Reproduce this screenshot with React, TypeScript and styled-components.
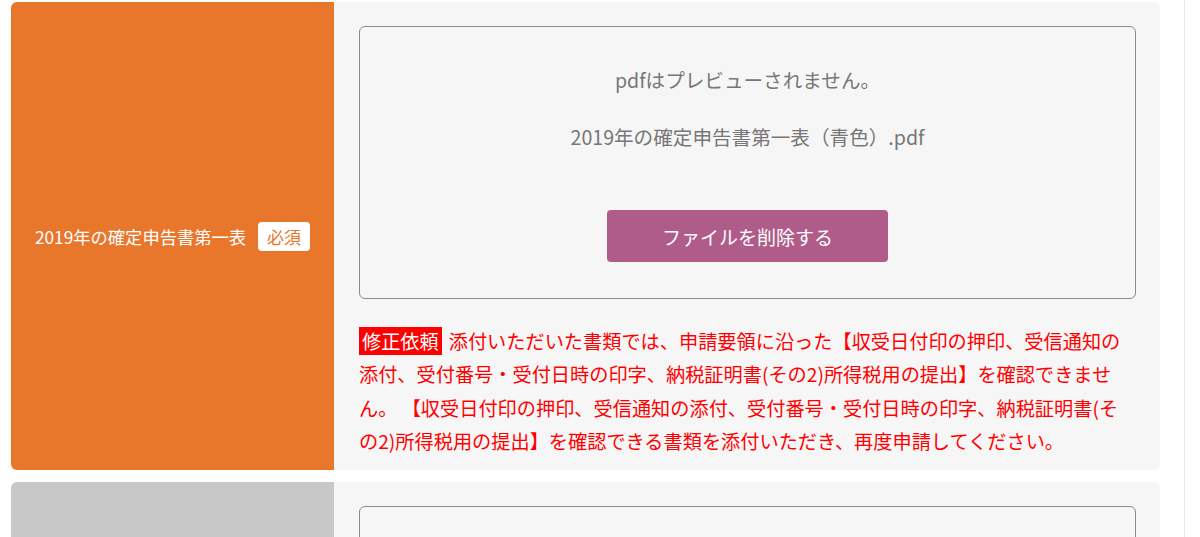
import React from 'react'
import styled, { createGlobalStyle } from 'styled-components'

const GlobalStyle = createGlobalStyle`
    html, body {
        margin: 0;
        padding: 0;
        background: #ffffff;
        font-family: 'Noto Sans CJK JP', 'Noto Sans', sans-serif;
    }
    * {
        box-sizing: border-box;
    }
`

type Upload = {
    label: string
    required: boolean
    fileName?: string
    done: boolean
    request?: string
}

const uploads: Upload[] = [
    {
        label: '2019年の確定申告書第一表',
        required: true,
        fileName: '2019年の確定申告書第一表（青色）.pdf',
        done: true,
        request:
            '添付いただいた書類では、申請要領に沿った【収受日付印の押印、受信通知の添付、受付番号・受付日時の印字、納税証明書(その2)所得税用の提出】を確認できません。 【収受日付印の押印、受信通知の添付、受付番号・受付日時の印字、納税証明書(その2)所得税用の提出】を確認できる書類を添付いただき、再度申請してください。',
    },
    {
        label: '2019年の確定申告書第二表',
        required: true,
        fileName: '2019年の確定申告書第二表.pdf',
        done: false,
    },
]

export default function App() {
    return (
        <>
            <GlobalStyle />
            <Page>
                <List>
                    {uploads.map((u) => (
                        <Card key={u.label}>
                            <LabelCol done={u.done}>
                                <LabelText>{u.label}</LabelText>
                                {u.required && <RequiredTag done={u.done}>必須</RequiredTag>}
                            </LabelCol>
                            <Body>
                                <FileBox>
                                    <Notice>pdfはプレビューされません。</Notice>
                                    <FileName>{u.fileName}</FileName>
                                    <DeleteButton type="button">ファイルを削除する</DeleteButton>
                                </FileBox>
                                {u.request && (
                                    <Request>
                                        <RequestTag>修正依頼</RequestTag>
                                        {u.request}
                                    </Request>
                                )}
                            </Body>
                        </Card>
                    ))}
                </List>
            </Page>
        </>
    )
}

const Page = styled.div`
    width: 1185px;
    border-right: 1px solid #e6e6e6;
    padding: 2px 24px 0 11px;
    min-height: 100vh;
`

const List = styled.div`
    display: flex;
    flex-direction: column;
    gap: 12px;
`

const Card = styled.div`
    display: flex;
    border-radius: 6px;
    overflow: hidden;
    background: #f6f6f6;
`

const LabelCol = styled.div<{ done: boolean }>`
    flex: 0 0 323px;
    display: flex;
    align-items: center;
    justify-content: center;
    gap: 12px;
    background: ${(p) => (p.done ? '#e8762b' : '#c8c8c8')};
`

const LabelText = styled.span`
    color: #ffffff;
    font-size: 17.3px;
`

const RequiredTag = styled.span<{ done: boolean }>`
    display: inline-flex;
    align-items: center;
    justify-content: center;
    width: 52px;
    height: 29px;
    border-radius: 4px;
    background: #ffffff;
    color: ${(p) => (p.done ? '#e8762b' : '#c8c8c8')};
    font-size: 17px;
`

const Body = styled.div`
    flex: 1;
    padding: 24px 24px 12px 25px;
`

const FileBox = styled.div`
    border: 1px solid #8a8a8a;
    border-radius: 6px;
    padding: 34px 0 36px;
    display: flex;
    flex-direction: column;
    align-items: center;
    color: #777777;
    font-size: 19.6px;
`

const Notice = styled.p`
    margin: 0;
    line-height: 38px;
`

const FileName = styled.p`
    margin: 19px 0 0;
    line-height: 38px;
`

const DeleteButton = styled.button`
    margin-top: 54px;
    width: 281px;
    height: 52px;
    border: none;
    border-radius: 4px;
    background: #b05c8a;
    color: #ffffff;
    font-family: inherit;
    font-size: 19px;
    cursor: pointer;
`

const Request = styled.p`
    margin: 26px 0 0;
    color: #ff0000;
    font-size: 19.2px;
    line-height: 33.3px;
`

const RequestTag = styled.span`
    display: inline-block;
    background: #ff0000;
    color: #ffffff;
    padding: 0 3px;
    line-height: 28px;
    margin-right: 7px;
`
